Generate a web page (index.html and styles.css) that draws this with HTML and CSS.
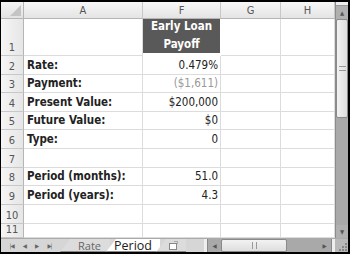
FILE: index.html
```html
<!DOCTYPE html>
<html lang="en">
<head>
  <meta charset="UTF-8">
  <title>Early Loan Payoff</title>
  <link rel="stylesheet" href="styles.css">
</head>
<body>
  <div class="window">
    <div class="main">
      <div class="sheet">
        <div class="corner"><span class="tri"></span></div>
        <div class="colhead">A</div>
        <div class="colhead">F</div>
        <div class="colhead">G</div>
        <div class="colhead">H</div>

        <div class="rowhead">1</div>
        <div class="cell"></div>
        <div class="cell title">Early Loan<br>Payoff</div>
        <div class="cell"></div>
        <div class="cell"></div>

        <div class="rowhead">2</div>
        <div class="cell label">Rate:</div>
        <div class="cell num">0.479%</div>
        <div class="cell"></div>
        <div class="cell"></div>

        <div class="rowhead">3</div>
        <div class="cell label">Payment:</div>
        <div class="cell num muted">($1,611)</div>
        <div class="cell"></div>
        <div class="cell"></div>

        <div class="rowhead">4</div>
        <div class="cell label">Present Value:</div>
        <div class="cell num">$200,000</div>
        <div class="cell"></div>
        <div class="cell"></div>

        <div class="rowhead">5</div>
        <div class="cell label">Future Value:</div>
        <div class="cell num">$0</div>
        <div class="cell"></div>
        <div class="cell"></div>

        <div class="rowhead">6</div>
        <div class="cell label">Type:</div>
        <div class="cell num">0</div>
        <div class="cell"></div>
        <div class="cell"></div>

        <div class="rowhead">7</div>
        <div class="cell"></div>
        <div class="cell"></div>
        <div class="cell"></div>
        <div class="cell"></div>

        <div class="rowhead">8</div>
        <div class="cell label">Period (months):</div>
        <div class="cell num">51.0</div>
        <div class="cell"></div>
        <div class="cell"></div>

        <div class="rowhead">9</div>
        <div class="cell label">Period (years):</div>
        <div class="cell num">4.3</div>
        <div class="cell"></div>
        <div class="cell"></div>

        <div class="rowhead">10</div>
        <div class="cell"></div>
        <div class="cell"></div>
        <div class="cell"></div>
        <div class="cell"></div>

        <div class="rowhead">11</div>
        <div class="cell"></div>
        <div class="cell"></div>
        <div class="cell"></div>
        <div class="cell"></div>
      </div>

      <div class="vscroll">
        <div class="vsplit"></div>
        <div class="varrow">&#9650;</div>
        <div class="vthumb"><span class="grip"></span></div>
        <div class="vtrack"></div>
        <div class="varrow down">&#9660;</div>
      </div>
    </div>

    <div class="bottom">
      <div class="nav">
        <span>|&#9664;</span>
        <span>&#9664;</span>
        <span>&#9654;</span>
        <span>&#9654;|</span>
      </div>
      <div class="tabs">
        <div class="tab rate">Rate</div>
        <div class="tab active">Period</div>
        <div class="tab newtab">
          <svg width="10" height="9" viewBox="0 0 10 9">
            <rect x="1.5" y="2.5" width="7" height="6" fill="#fff" stroke="#888"/>
            <path d="M6 0.5 L9.5 0.5 L9.5 3" fill="none" stroke="#aaa"/>
          </svg>
        </div>
      </div>
      <div class="hscroll">
        <span class="hsplit"></span>
        <span class="harrow">&#9664;</span>
        <span class="hthumb"><span class="hgrip"></span></span>
        <span class="htrack"></span>
        <span class="harrow">&#9654;</span>
        <span class="hsplit end"></span>
      </div>
      <div class="resize">
        <svg width="10" height="10" viewBox="0 0 10 10">
          <g fill="#888">
            <rect x="7" y="1" width="2" height="2"/>
            <rect x="4" y="4" width="2" height="2"/>
            <rect x="7" y="4" width="2" height="2"/>
            <rect x="1" y="7" width="2" height="2"/>
            <rect x="4" y="7" width="2" height="2"/>
            <rect x="7" y="7" width="2" height="2"/>
          </g>
        </svg>
      </div>
    </div>
  </div>
</body>
</html>
```

FILE: styles.css
```css
* { margin: 0; padding: 0; box-sizing: border-box; }
body {
  background: #000;
  font-family: "DejaVu Sans Condensed", "DejaVu Sans", sans-serif;
  color: #222;
}
.window {
  width: 350px;
  height: 254px;
  padding: 2px 2px 2px 1px;
  background: #000;
  display: flex;
  flex-direction: column;
}
.main {
  display: flex;
  height: 236px;
  background: #fff;
}

/* Sheet grid */
.sheet {
  flex: 1;
  display: grid;
  grid-template-columns: 23px 119px 78px 60px 54px;
  grid-template-rows: 17px 37px 19px 18px 19px 18px 19px 19px 18px 19px 19px 14px;
  overflow: hidden;
}
.corner {
  background: linear-gradient(#f4f4f4, #e2e2e2);
  border-right: 1px solid #b5b5b5;
  border-bottom: 1px solid #b5b5b5;
  position: relative;
}
.tri {
  position: absolute;
  right: 2px;
  bottom: 2px;
  width: 0;
  height: 0;
  border-left: 11px solid transparent;
  border-bottom: 11px solid #c4c4c4;
}
.colhead {
  background: linear-gradient(#f7f7f7, #e4e4e4);
  border-right: 1px solid #c8c8c8;
  border-bottom: 1px solid #b5b5b5;
  display: flex;
  align-items: center;
  justify-content: center;
  font-size: 11px;
  color: #555;
}
.rowhead {
  background: linear-gradient(90deg, #f5f5f5, #e6e6e6);
  border-right: 1px solid #b5b5b5;
  border-bottom: 1px solid #c8c8c8;
  display: flex;
  align-items: flex-end;
  justify-content: center;
  padding-bottom: 1px;
  font-size: 11px;
  color: #555;
}
.cell {
  border-right: 1px solid #dcdcdc;
  border-bottom: 1px solid #dcdcdc;
  display: flex;
  align-items: flex-end;
  padding: 0 2px 2px 3px;
  font-size: 11.5px;
  white-space: nowrap;
}
.label {
  font-weight: bold;
}
.num {
  justify-content: flex-end;
}
.muted {
  color: #999;
}
.title {
  background: #595959;
  color: #fff;
  font-weight: bold;
  justify-content: center;
  align-items: center;
  text-align: center;
  line-height: 18px;
  padding: 0 0 2px;
  border-right-color: #fff;
  border-bottom: 3px solid #fff;
}

/* Vertical scrollbar */
.vscroll {
  width: 13px;
  display: flex;
  flex-direction: column;
  background: #a9a9a9;
  border-left: 1px solid #8c8c8c;
}
.vsplit {
  height: 4px;
  background: #eee;
  border-bottom: 1px solid #999;
}
.varrow {
  height: 13px;
  font-size: 6px;
  color: #555;
  background: #b0b0b0;
  display: flex;
  align-items: center;
  justify-content: center;
}
.vthumb {
  height: 99px;
  background: linear-gradient(90deg, #f2f2f2, #dedede);
  border: 1px solid #8a8a8a;
  border-radius: 2px;
  display: flex;
  align-items: center;
  justify-content: center;
}
.grip {
  width: 7px;
  height: 5px;
  border-top: 1px solid #999;
  border-bottom: 1px solid #999;
}
.vtrack {
  flex: 1;
}

/* Bottom bar */
.bottom {
  height: 14px;
  display: flex;
  background: #d6d6d6;
  border-top: 1px solid #aaa;
  font-size: 11px;
}
.nav {
  width: 59px;
  display: flex;
  align-items: center;
  justify-content: space-around;
  padding: 0 4px;
  font-size: 6px;
  color: #666;
  letter-spacing: -1px;
}
.tabs {
  display: flex;
  align-items: stretch;
  width: 140px;
}
.tab {
  background: #dcdcdc;
  color: #666;
  clip-path: polygon(10px 0, 100% 0, 100% 100%, 0 100%);
  border-bottom: 1px solid #888;
  display: flex;
  align-items: center;
  font-family: "Open Sans", sans-serif;
  font-size: 11px;
}
.tab.rate {
  width: 50px;
  padding-left: 18px;
}
.tab.active {
  width: 54px;
  margin-left: -4px;
  padding-left: 8px;
  background: #fff;
  color: #222;
  font-size: 12.5px;
}
.tab.newtab {
  width: 30px;
  margin-left: -4px;
  padding-left: 12px;
}
.hscroll {
  flex: 1;
  margin-left: 4px;
  display: flex;
  align-items: stretch;
  background: #a9a9a9;
}
.hsplit {
  width: 4px;
  background: #eee;
  border-right: 1px solid #888;
}
.hsplit.end {
  border-right: none;
  border-left: 1px solid #888;
}
.harrow {
  width: 13px;
  font-size: 6px;
  color: #555;
  display: flex;
  align-items: center;
  justify-content: center;
}
.hthumb {
  width: 66px;
  background: linear-gradient(#f2f2f2, #dedede);
  border: 1px solid #8a8a8a;
  border-radius: 2px;
  display: flex;
  align-items: center;
  justify-content: center;
}
.hgrip {
  width: 5px;
  height: 7px;
  border-left: 1px solid #999;
  border-right: 1px solid #999;
}
.htrack {
  flex: 1;
}
.resize {
  width: 13px;
  background: #b9b9b9;
  display: flex;
  align-items: flex-end;
  justify-content: flex-end;
}
```
